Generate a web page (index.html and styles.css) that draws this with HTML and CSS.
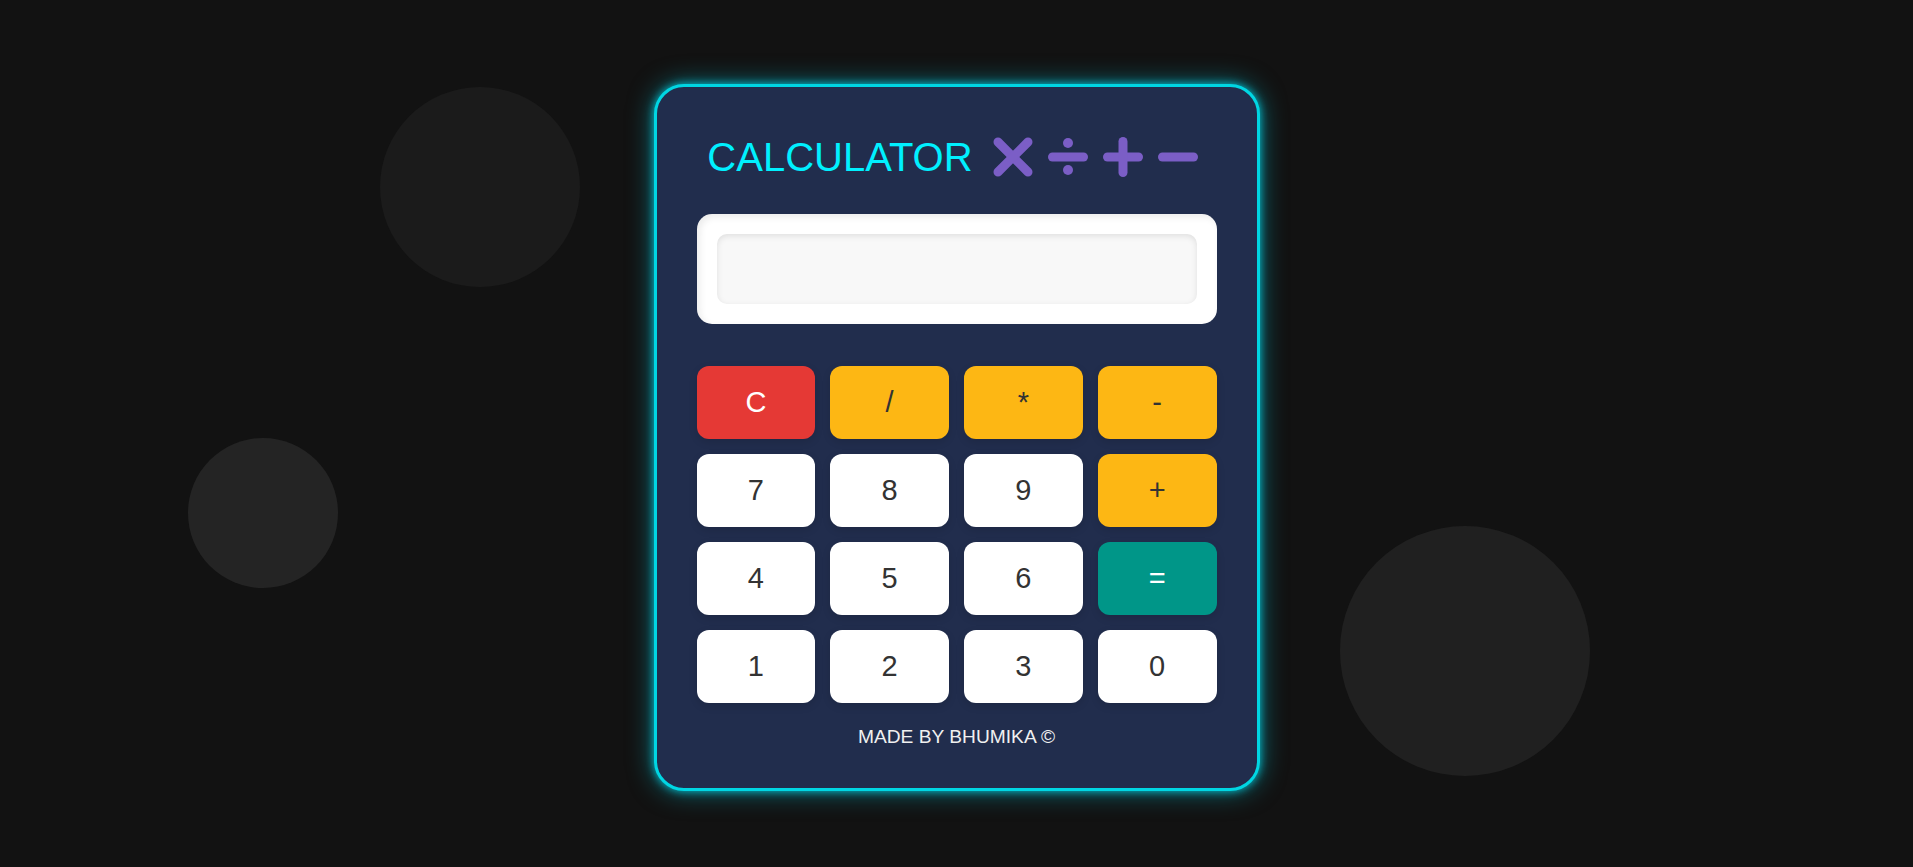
FILE: index.html
```html
<!DOCTYPE html>
<html lang="en">
<head>
<meta charset="UTF-8">
<title>Calculator</title>
<link rel="stylesheet" href="styles.css">
</head>
<body>
<div class="page">
  <div class="bubble bubble-one"></div>
  <div class="bubble bubble-two"></div>
  <div class="bubble bubble-three"></div>
  <div class="calculator">
    <div class="title">
      <span class="title-text">CALCULATOR</span>
      <span class="ops">
        <svg class="op-icon" viewBox="0 0 40 40" width="40" height="40"><line x1="5" y1="5" x2="35" y2="35"/><line x1="35" y1="5" x2="5" y2="35"/></svg>
        <svg class="op-icon" viewBox="0 0 40 40" width="40" height="40"><line x1="4.5" y1="20" x2="35.5" y2="20"/><circle class="dot" cx="20" cy="6" r="5"/><circle class="dot" cx="20" cy="33" r="5"/></svg>
        <svg class="op-icon" viewBox="0 0 40 40" width="40" height="40"><line x1="4.5" y1="20" x2="35.5" y2="20"/><line x1="20" y1="4.5" x2="20" y2="35.5"/></svg>
        <svg class="op-icon" viewBox="0 0 40 40" width="40" height="40"><line x1="4.5" y1="20" x2="35.5" y2="20"/></svg>
      </span>
    </div>
    <div class="display"><input class="screen" type="text" readonly></div>
    <div class="keys">
      <button class="key key-clear">C</button>
      <button class="key key-op">/</button>
      <button class="key key-op">*</button>
      <button class="key key-op">-</button>
      <button class="key">7</button>
      <button class="key">8</button>
      <button class="key">9</button>
      <button class="key key-op">+</button>
      <button class="key">4</button>
      <button class="key">5</button>
      <button class="key">6</button>
      <button class="key key-equal">=</button>
      <button class="key">1</button>
      <button class="key">2</button>
      <button class="key">3</button>
      <button class="key">0</button>
    </div>
    <p class="credit">MADE BY BHUMIKA ©</p>
  </div>
</div>
</body>
</html>
```
FILE: styles.css
```css
* {
  box-sizing: border-box;
}

html, body {
  margin: 0;
  padding: 0;
  background: #121212;
  font-family: "Liberation Sans", Arial, sans-serif;
}

.page {
  position: relative;
  min-height: 100vh;
  display: flex;
  justify-content: center;
  align-items: flex-start;
  padding-top: 84px;
  overflow: hidden;
}

.bubble {
  position: absolute;
  border-radius: 50%;
}

.bubble-one {
  left: 380px;
  top: 87px;
  width: 200px;
  height: 200px;
  background: #1b1b1b;
}

.bubble-two {
  left: 188px;
  top: 438px;
  width: 150px;
  height: 150px;
  background: #242424;
}

.bubble-three {
  left: 1340px;
  top: 526px;
  width: 250px;
  height: 250px;
  background: #202020;
}

.calculator {
  position: relative;
  width: 606px;
  padding: 40px;
  background: #212d4d;
  border: 3px solid #00d6e3;
  border-radius: 30px;
  box-shadow: 0 0 8px rgba(0, 220, 240, 0.8), 0 0 26px rgba(0, 200, 220, 0.55);
}

.title {
  height: 60px;
  display: flex;
  align-items: center;
  justify-content: center;
}

.title-text {
  font-size: 40px;
  color: #00f0ff;
  margin-right: 13px;
}

.ops {
  display: flex;
  align-items: center;
}

.op-icon {
  display: block;
  margin: 0 8px 0 7px;
  stroke: #7b5ec6;
  stroke-width: 9;
  stroke-linecap: round;
  fill: none;
}

.op-icon .dot {
  fill: #7b5ec6;
  stroke: none;
}

.display {
  margin-top: 27px;
  padding: 20px;
  background: #ffffff;
  border-radius: 15px;
  box-shadow: inset 3px 3px 7px rgba(0, 0, 0, 0.08);
}

.screen {
  display: block;
  width: 100%;
  height: 70px;
  border: none;
  outline: none;
  border-radius: 10px;
  background: #f8f8f8;
  box-shadow: inset 0 2px 6px rgba(0, 0, 0, 0.1);
  font-family: "Liberation Sans", Arial, sans-serif;
  font-size: 30px;
  text-align: right;
  padding: 0 15px;
}

.keys {
  margin-top: 42px;
  display: grid;
  grid-template-columns: repeat(4, 1fr);
  grid-auto-rows: 73px;
  gap: 15px;
}

.key {
  border: none;
  border-radius: 12px;
  background: #ffffff;
  color: #333333;
  font-family: "Liberation Sans", Arial, sans-serif;
  font-size: 29px;
  box-shadow: 0 3px 8px rgba(0, 0, 0, 0.12);
  padding: 0;
}

.key-clear {
  background: #e53935;
  color: #ffffff;
}

.key-op {
  background: #fdb714;
  color: #333333;
}

.key-equal {
  background: #009688;
  color: #ffffff;
}

.credit {
  margin: 23px 0 0;
  text-align: center;
  font-size: 19.2px;
  color: #f0f0f0;
}
```
